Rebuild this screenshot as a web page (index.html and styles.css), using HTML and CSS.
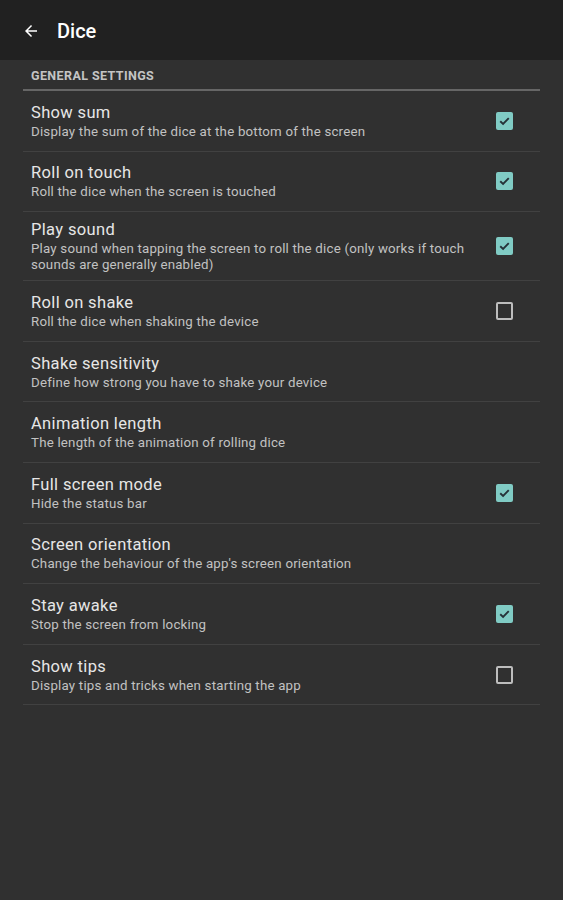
FILE: index.html
```html
<!DOCTYPE html>
<html>
<head>
<meta charset="utf-8">
<link rel="stylesheet" href="styles.css">
</head>
<body>
<div class="toolbar">
  <svg class="back" width="18" height="18" viewBox="0 0 24 24"><path d="M20 11H7.83l5.59-5.59L12 4l-8 8 8 8 1.41-1.41L7.83 13H20v-2z" fill="#fff"/></svg>
  <span class="title">Dice</span>
</div>
<div class="content">
  <div class="category">GENERAL SETTINGS</div>
  <div class="list">
    <div class="row"><div class="text"><div class="t">Show sum</div><div class="s">Display the sum of the dice at the bottom of the screen</div></div><div class="cb on"><svg viewBox="0 0 18 18"><path d="M4.5 9.2l3 2.8 6-6" /></svg></div></div>
    <div class="row"><div class="text"><div class="t">Roll on touch</div><div class="s">Roll the dice when the screen is touched</div></div><div class="cb on"><svg viewBox="0 0 18 18"><path d="M4.5 9.2l3 2.8 6-6" /></svg></div></div>
    <div class="row"><div class="text"><div class="t">Play sound</div><div class="s">Play sound when tapping the screen to roll the dice (only works if touch sounds are generally enabled)</div></div><div class="cb on"><svg viewBox="0 0 18 18"><path d="M4.5 9.2l3 2.8 6-6" /></svg></div></div>
    <div class="row"><div class="text"><div class="t">Roll on shake</div><div class="s">Roll the dice when shaking the device</div></div><div class="cb off"></div></div>
    <div class="row"><div class="text"><div class="t">Shake sensitivity</div><div class="s">Define how strong you have to shake your device</div></div></div>
    <div class="row"><div class="text"><div class="t">Animation length</div><div class="s">The length of the animation of rolling dice</div></div></div>
    <div class="row"><div class="text"><div class="t">Full screen mode</div><div class="s">Hide the status bar</div></div><div class="cb on"><svg viewBox="0 0 18 18"><path d="M4.5 9.2l3 2.8 6-6" /></svg></div></div>
    <div class="row"><div class="text"><div class="t">Screen orientation</div><div class="s">Change the behaviour of the app's screen orientation</div></div></div>
    <div class="row"><div class="text"><div class="t">Stay awake</div><div class="s">Stop the screen from locking</div></div><div class="cb on"><svg viewBox="0 0 18 18"><path d="M4.5 9.2l3 2.8 6-6" /></svg></div></div>
    <div class="row"><div class="text"><div class="t">Show tips</div><div class="s">Display tips and tricks when starting the app</div></div><div class="cb off"></div></div>
  </div>
</div>
</body>
</html>
```

FILE: styles.css
```css
* { box-sizing: border-box; }
html, body { margin: 0; padding: 0; }
body {
  background: #303030;
  font-family: Roboto, "Noto Sans", sans-serif;
  width: 563px;
  height: 900px;
  overflow: hidden;
}
.toolbar {
  height: 60px;
  background: #212121;
  display: flex;
  align-items: center;
  padding-left: 22px;
}
.back { display: block; margin-top: 1px; }
.title {
  color: #fff;
  font-size: 20px;
  font-weight: 500;
  margin-left: 17px;
  margin-top: 1px;
}
.content { padding: 0 23px; }
.category {
  height: 31px;
  padding-left: 8px;
  padding-top: 8px;
  font-size: 12.5px;
  font-weight: 700;
  letter-spacing: 0.4px;
  color: #c4c4c4;
  line-height: 15px;
  border-bottom: 2px solid #666;
}
.row {
  display: flex;
  align-items: center;
  min-height: 60.6px;
  padding: 7px 0 7px 8px;
  border-bottom: 1px solid #414141;
}
.text { flex: 0 0 442px; }
.t {
  font-size: 16.5px;
  letter-spacing: 0.35px;
  line-height: 21px;
  color: #e6e6e6;
}
.s {
  font-size: 13.3px;
  letter-spacing: 0.2px;
  line-height: 16px;
  color: #c2c2c2;
  margin-top: 1px;
}
.cb {
  width: 17px;
  height: 18px;
  margin-left: 23px;
  border-radius: 2px;
}
.cb.on { background: #80cbc4; }
.cb.on svg { width: 17px; height: 18px; display: block; }
.cb.on path { fill: none; stroke: #263238; stroke-width: 2; }
.cb.off { border: 2px solid #bdbdbd; }
```
